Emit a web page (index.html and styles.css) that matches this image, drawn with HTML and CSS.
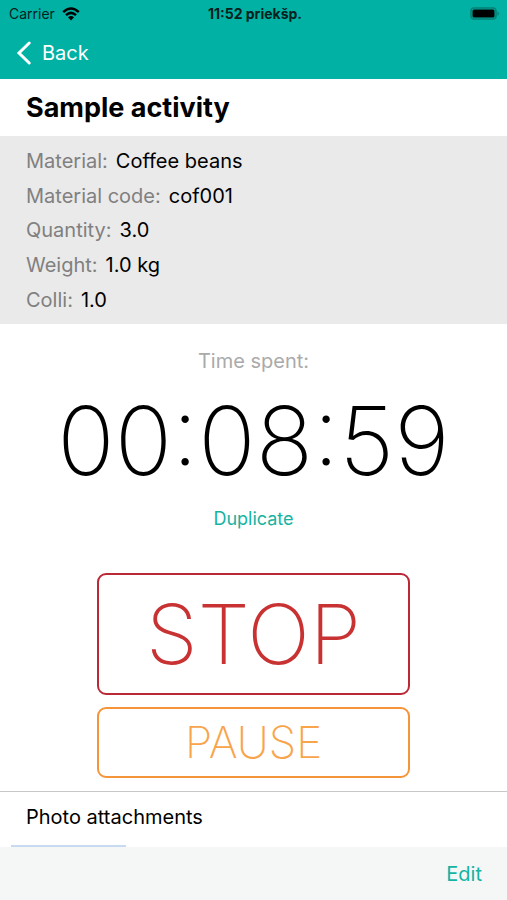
FILE: index.html
```html
<!DOCTYPE html>
<html lang="en">
<head>
<meta charset="utf-8">
<meta name="viewport" content="width=device-width, initial-scale=1">
<title>Sample activity</title>
<link rel="stylesheet" href="styles.css">
</head>
<body>
<div class="app">
  <header class="header">
    <div class="status">
      <div class="status-side">
        <span>Carrier</span>
        <svg class="wifi" viewBox="0 0 18 14" aria-hidden="true">
          <path d="M1.2 5.1Q9-2.1 16.8 5.1M4 8.1Q9 3.7 14 8.1" fill="none" stroke="currentColor" stroke-width="2.5"/>
          <path d="M6 10.3Q9 7.7 12 10.3L9 13.5Z" fill="currentColor"/>
        </svg>
      </div>
      <span class="clock">11:52 priekšp.</span>
      <div class="status-side status-end">
        <svg class="battery" viewBox="0 0 32 14" aria-hidden="true">
          <rect x="2" y="1" width="25" height="11" rx="3" fill="none" stroke="#047f76" stroke-width="1.6"/>
          <rect x="3.5" y="2.5" width="22" height="8" rx="1.5" fill="#000"/>
          <path d="M28.5 4.5q3 2 0 4.5z" fill="#047f76"/>
        </svg>
      </div>
    </div>
    <nav class="nav">
      <a class="back" href="#">
        <svg class="chevron" viewBox="0 0 16 24" aria-hidden="true"><path d="M13.2 2L3 12L13.2 22" fill="none" stroke="currentColor" stroke-width="3" stroke-linecap="round" stroke-linejoin="miter"/></svg>
        <span>Back</span>
      </a>
    </nav>
  </header>
  <main class="content">
    <h1 class="title">Sample activity</h1>
    <dl class="details">
      <div class="row"><dt>Material:</dt><dd>Coffee beans</dd></div>
      <div class="row"><dt>Material code:</dt><dd>cof001</dd></div>
      <div class="row"><dt>Quantity:</dt><dd>3.0</dd></div>
      <div class="row"><dt>Weight:</dt><dd>1.0 kg</dd></div>
      <div class="row"><dt>Colli:</dt><dd>1.0</dd></div>
    </dl>
    <section class="tracker">
      <p class="caption">Time spent:</p>
      <div class="timer" role="timer">00:08:59</div>
      <button class="duplicate" type="button">Duplicate</button>
      <div class="actions">
        <button class="action stop" type="button">STOP</button>
        <button class="action pause" type="button">PAUSE</button>
      </div>
    </section>
    <section class="photos">
      <h2 class="photos-title">Photo attachments</h2>
      <div class="thumb"></div>
    </section>
  </main>
  <footer class="toolbar">
    <button class="edit" type="button">Edit</button>
  </footer>
</div>
</body>
</html>
```
FILE: styles.css
```css
* {
  box-sizing: border-box;
}

body {
  margin: 0;
  background: #fff;
  color: #000;
  font-family: Inter, "Liberation Sans", sans-serif;
  font-size: 20px;
  line-height: 24px;
}

h1, h2, p, dl, dd {
  margin: 0;
}

button {
  padding: 0;
  border: 0;
  background: none;
  font-family: inherit;
}

.app {
  display: flex;
  flex-direction: column;
  min-height: 100vh;
}

.header {
  background: #00b1a4;
}

.status {
  display: flex;
  align-items: center;
  height: 27px;
  padding: 0 6px 0 9px;
  color: #06201e;
  font-size: 14px;
}

.status-side {
  display: flex;
  flex: 1;
  align-items: center;
  gap: 7px;
}

.status-end {
  justify-content: flex-end;
}

.clock {
  font-weight: 700;
}

.wifi {
  width: 18px;
  height: 14px;
  color: #000;
}

.battery {
  width: 32px;
  height: 14px;
}

.nav {
  display: flex;
  align-items: center;
  height: 52px;
  padding: 0 16px;
}

.back {
  display: flex;
  align-items: center;
  gap: 10px;
  color: #fff;
  text-decoration: none;
}

.chevron {
  width: 16px;
  height: 24px;
}

.content {
  flex: 1;
}

.title {
  padding: 15px 26px 14px;
  font-size: 27px;
  font-weight: 700;
  line-height: 28px;
}

.details {
  display: grid;
  grid-auto-rows: 1fr;
  min-height: 188px;
  padding: 8px 26px 7px;
  background: #eaeaea;
}

.row {
  display: flex;
  align-items: center;
  gap: 8px;
}

.row dt {
  color: #808080;
}

.tracker {
  display: flex;
  flex-direction: column;
  align-items: center;
  padding: 25px 16px 13px;
  border-bottom: 1px solid #c8c8c8;
}

.caption {
  color: #aaa;
}

.timer {
  margin: 20px 0 18px;
  font-size: 95px;
  font-weight: 200;
  line-height: 96px;
}

.duplicate {
  color: #14b3a2;
  font-size: 18px;
  line-height: 24px;
}

.actions {
  display: grid;
  gap: 12px;
  width: 66%;
  margin-top: 42px;
}

.action {
  border: 2px solid;
  border-radius: 9px;
  font-weight: 200;
}

.stop {
  padding: 14px 0;
  border-color: #bc2936;
  color: #c83232;
  font-size: 83px;
  line-height: 90px;
}

.pause {
  padding: 9px 0;
  border-color: #f5953a;
  color: #f9a44a;
  font-size: 44px;
  line-height: 49px;
}

.photos-title {
  padding: 13px 26px 16px;
  font-size: 20px;
  font-weight: 400;
  line-height: 24px;
}

.thumb {
  width: 115px;
  height: 2px;
  margin-left: 11px;
  background: #c8daf1;
}

.toolbar {
  display: flex;
  align-items: center;
  justify-content: flex-end;
  height: 53px;
  padding: 0 25px;
  background: #f5f7f7;
}

.edit {
  color: #14b3a2;
  font-size: 20px;
  line-height: 24px;
}
```
